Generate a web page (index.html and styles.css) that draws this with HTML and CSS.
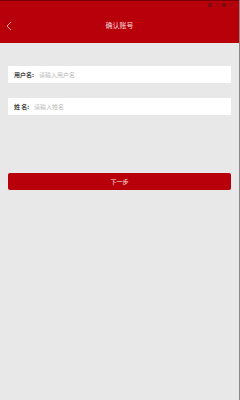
FILE: index.html
```html
<!DOCTYPE html>
<html lang="zh">
<head>
    <meta charset="UTF-8">
    <title>确认账号</title>
    <link rel="stylesheet" href="styles.css">
</head>
<body>
    <div class="header">
        <div class="status-bar">
            <span class="dot"></span>
            <span class="dot dim"></span>
            <span class="dot"></span>
            <span class="dot dim"></span>
        </div>
        <div class="title-bar">
            <svg class="back" width="6" height="10" viewBox="0 0 6 10">
                <path d="M5 1 L1 5 L5 9" fill="none" stroke="#f3a9ad" stroke-width="1"/>
            </svg>
            <span class="title">确认账号</span>
        </div>
    </div>

    <div class="form">
        <div class="field">
            <span class="label">用户名:</span>
            <span class="placeholder">请输入用户名</span>
        </div>
        <div class="field">
            <span class="label">姓 名:</span>
            <span class="placeholder">请输入姓名</span>
        </div>
        <button class="next-btn">下一步</button>
    </div>
</body>
</html>
```

FILE: styles.css
```css
html, body {
    margin: 0;
    height: 100%;
}
body {
    font-family: "Noto Sans CJK SC", "Noto Sans", sans-serif;
    background: #e8e8e8;
    border-right: 1px solid #8a8a8a;
    box-sizing: border-box;
}
.header {
    background: #b8000b;
    height: 43px;
    border-top: 1px solid #7a0008;
    box-sizing: border-box;
}
.status-bar {
    height: 7px;
    display: flex;
    justify-content: flex-end;
    align-items: center;
    gap: 3px;
    padding-right: 6px;
}
.dot {
    width: 4px;
    height: 4px;
    background: #7d0a10;
    border-radius: 1px;
}
.dot.dim {
    background: #a5060f;
}
.title-bar {
    position: relative;
    height: 35px;
    display: flex;
    align-items: center;
    justify-content: center;
}
.back {
    position: absolute;
    left: 6px;
    top: 13px;
}
.title {
    color: #f6d6d8;
    font-size: 7px;
    line-height: 1;
}
.form {
    padding: 23px 8px 0 8px;
}
.field {
    background: #fff;
    height: 17px;
    display: flex;
    align-items: center;
    padding-left: 6px;
    margin-bottom: 15px;
    font-size: 6px;
    line-height: 1;
}
.label {
    color: #444;
    font-weight: bold;
    width: 25px;
    white-space: pre;
}
.field:nth-child(2) .label {
    width: 20px;
}
.placeholder {
    color: #b8b8b8;
}
.next-btn {
    display: block;
    width: 100%;
    height: 17px;
    margin-top: 58px;
    border: none;
    border-radius: 2px;
    background: #b8000b;
    color: #fbe3e4;
    font-family: inherit;
    font-size: 6px;
    padding: 0;
}
```
